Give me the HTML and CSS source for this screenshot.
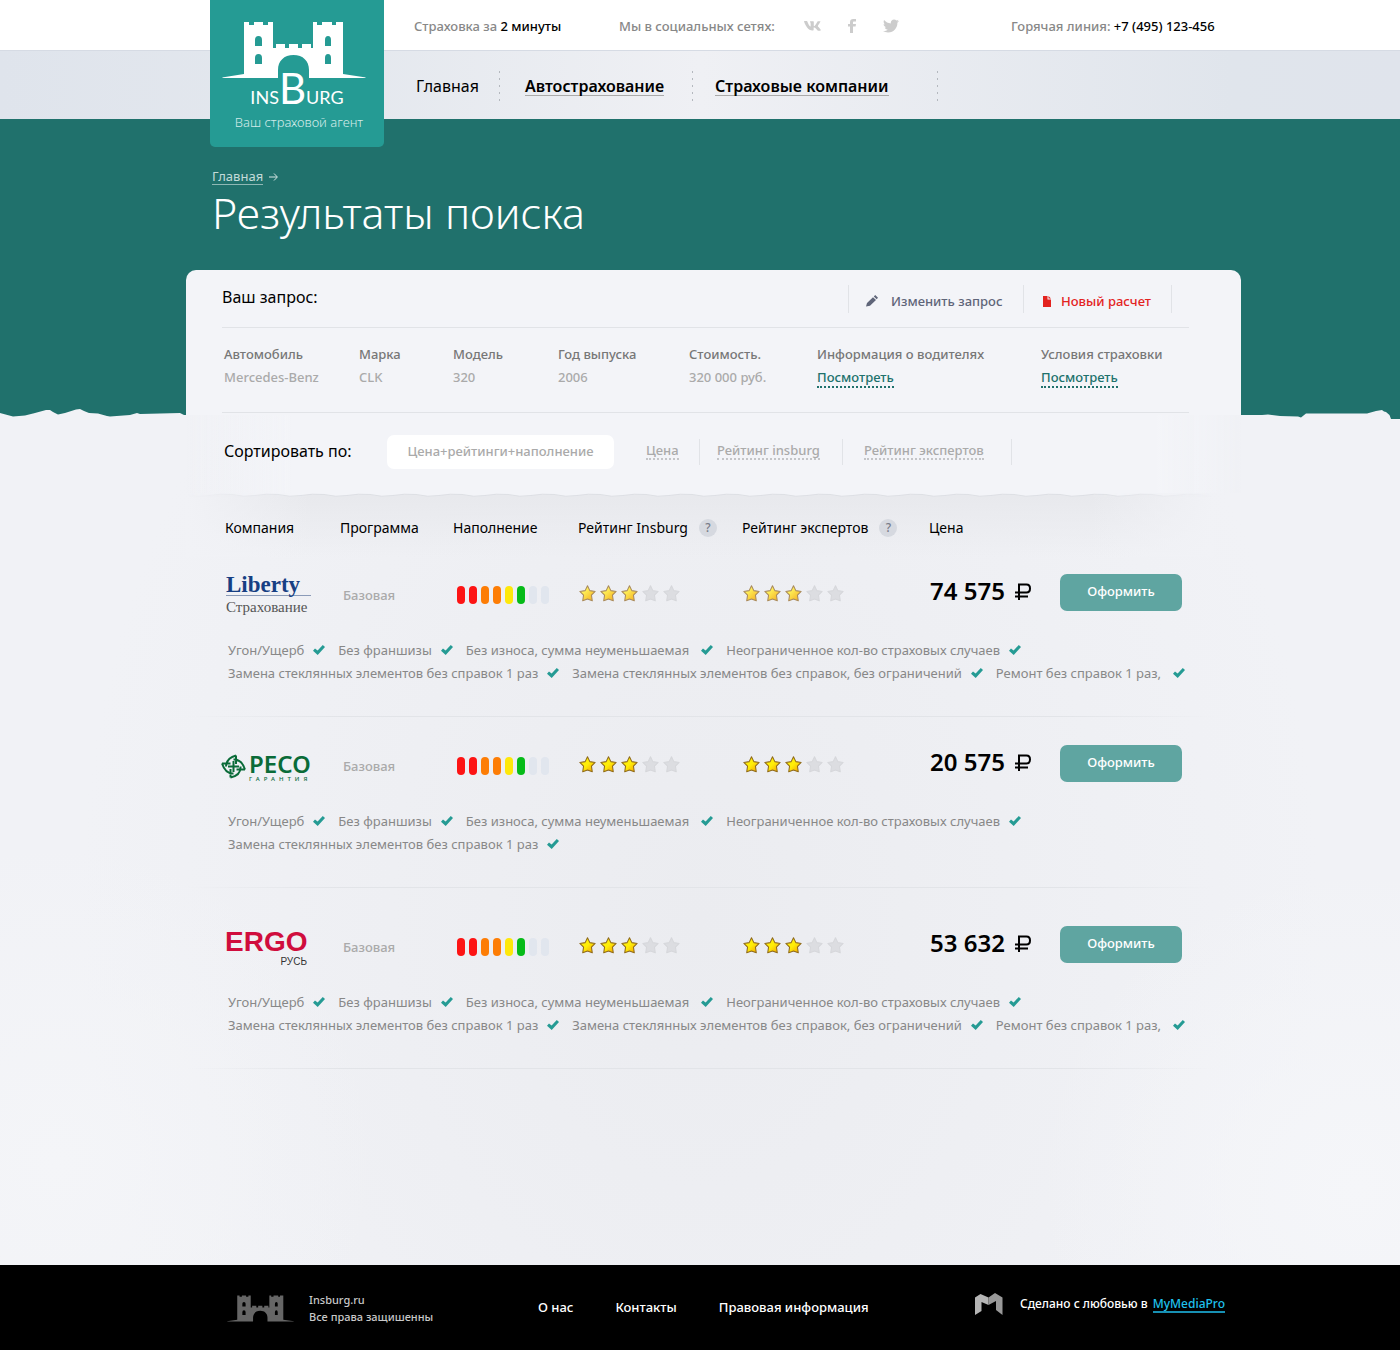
FILE: index.html
```html
<!DOCTYPE html>
<html lang="ru">
<head>
<meta charset="utf-8">
<meta name="viewport" content="width=device-width, initial-scale=1">
<title>Результаты поиска — Insburg</title>
<link rel="stylesheet" href="styles.css">
</head>
<body>
<svg class="sprite" aria-hidden="true">
  <symbol id="castle" viewBox="0 0 144 58"><path fill-rule="evenodd" d="M0 57.500L22 54V2h5v3h5V2h9v3h5V2h5v26h3v-4h9v4h4v-4h9v4h4v-4h9v4h2V2h4v3h5V2h10v3h4V2h7v52l23 3.500-1 .5H87V50c0-9-6-15-15.500-15S56 41 56 50v8H1zM33 26h7v-6a3.500 4 0 0 0-7 0zm0 18h7v-6a3.500 4 0 0 0-7 0zm70-18h6v-6a3 4 0 0 0-6 0zm0 18h6v-6a3 4 0 0 0-6 0z"/></symbol>
  <symbol id="vk" viewBox="0 6.500 21.500 12.500"><path d="M20.800 7.700c.1-.5 0-.8-.7-.8h-2.300c-.6 0-.9.3-1 .6 0 0-1.200 2.900-2.900 4.700-.5.5-.8.7-1.100.7-.1 0-.4-.2-.4-.6V7.700c0-.5-.2-.8-.7-.8H8.100c-.4 0-.6.3-.6.5 0 .5.8.7.9 2.100v3.100c0 .7-.1.8-.4.8-.8 0-2.700-2.900-3.800-6.200-.2-.6-.4-.9-1-.9H.9c-.7 0-.8.3-.8.6 0 .6.8 3.600 3.600 7.500 1.900 2.700 4.500 4.100 6.900 4.100 1.400 0 1.600-.3 1.600-.9v-2c0-.7.1-.8.6-.8.3 0 1 .2 2.400 1.500 1.600 1.600 1.900 2.300 2.800 2.300h2.300c.7 0 1-.3.8-1-.2-.6-.9-1.600-1.900-2.700-.5-.6-1.300-1.300-1.500-1.600-.3-.4-.2-.6 0-1 0 0 2.700-3.800 3-5.100z"/></symbol>
  <symbol id="fb" viewBox="0 0 8 14"><path d="M2 14V7.600H0V5h2V3.200C2 1.200 3.200 0 5.200 0H8v2.500H6.200C5.300 2.500 5 2.800 5 3.500V5h3l-.4 2.600H5V14z"/></symbol>
  <symbol id="tw" viewBox="0 2 24 20"><path d="M23.954 4.569c-.885.389-1.830.654-2.825.775 1.014-.611 1.794-1.574 2.163-2.723-.951.555-2.005.959-3.127 1.184-.896-.959-2.173-1.559-3.591-1.559-2.717 0-4.920 2.203-4.920 4.917 0 .39.045.765.127 1.124C7.691 8.094 4.066 6.130 1.640 3.161c-.427.722-.666 1.561-.666 2.475 0 1.710.87 3.213 2.188 4.096-.807-.026-1.566-.248-2.228-.616v.061c0 2.385 1.693 4.374 3.946 4.827-.413.111-.849.171-1.296.171-.314 0-.615-.03-.916-.086.631 1.953 2.445 3.377 4.604 3.417-1.680 1.319-3.809 2.105-6.102 2.105-.39 0-.779-.023-1.170-.067 2.189 1.394 4.768 2.209 7.557 2.209 9.054 0 13.999-7.496 13.999-13.986 0-.209 0-.42-.015-.63.961-.689 1.800-1.560 2.460-2.548z"/></symbol>
  <symbol id="star" viewBox="0 0 16 16"><path d="M8 .8l2.200 4.500 5 .8-3.500 3.500.8 5.200L8 13.100 3.500 14.800l.8-5.200L.8 6.100l5-.8z" stroke-width="1" stroke-linejoin="round"/></symbol>
  <symbol id="check" viewBox="0 0 12 10"><path d="M0 5.700L2 3.600l2.600 2L9.800 0 12 2 4.700 10z"/></symbol>
  <symbol id="ruble" viewBox="0 0 16 17"><path d="M4 17V1.500h7.500q3.500 0 3.500 4T11.500 9.500H0M0 13.500h13" fill="none" stroke="#000" stroke-width="2"/></symbol>
  <symbol id="pencil" viewBox="0 0 12 12"><path d="M0 11.500L1 8l6-5.800L10 5l-6 5.800zM7.800 1.500L9.200 0 12 2.800 10.700 4.200z"/></symbol>
  <symbol id="page" viewBox="0 0 8 11"><path d="M0 0h4.500v3.500H8V11H0zM5.500 0L8 2.600H5.500z"/></symbol>
  <linearGradient id="gold" x1="0" y1="0" x2="1" y2="1"><stop offset=".3" stop-color="#fff25a"/><stop offset="1" stop-color="#f3a81c"/></linearGradient>
  <linearGradient id="gold-bright" x1="0" y1="0" x2="1" y2="1"><stop offset=".5" stop-color="#ffee08"/><stop offset="1" stop-color="#f39a00"/></linearGradient>
  <pattern id="wave" width="46" height="4" patternUnits="userSpaceOnUse"><path d="M0 0H46V1.500Q34 .5 23 2.500T0 1.500z" fill="#f3f4f8"/><path d="M0 1.500Q12 4.500 23 2.500T46 1.500" fill="none" stroke="#dddfe4"/></pattern>
</svg>

<header class="header">
  <div class="topbar">
    <div class="wrap topbar-row">
      <p>Страховка за <strong>2 минуты</strong></p>
      <p>Мы в социальных сетях:</p>
      <div class="social">
        <a href="#" aria-label="ВКонтакте"><svg width="17" height="10"><use href="#vk"/></svg></a>
        <a href="#" aria-label="Facebook"><svg width="8" height="14"><use href="#fb"/></svg></a>
        <a href="#" aria-label="Twitter"><svg width="16" height="14"><use href="#tw"/></svg></a>
      </div>
      <p>Горячая линия: <strong>+7 (495) 123-456</strong></p>
    </div>
  </div>
  <div class="navbar">
    <nav class="wrap nav-row">
      <a class="nav-home" href="#">Главная</a>
      <a class="nav-auto" href="#"><span>Автострахование</span></a>
      <a class="nav-firms" href="#"><span>Страховые компании</span></a>
    </nav>
  </div>
  <div class="wrap logo-anchor">
    <a class="logo" href="#">
      <svg class="logo-castle" width="144" height="58"><use href="#castle"/></svg>
      <span class="logo-name">INS<b>B</b>URG</span>
      <span class="logo-tagline">Ваш страховой агент</span>
    </a>
  </div>
</header>

<section class="hero">
  <div class="wrap">
    <p class="crumbs"><a href="#">Главная</a>
      <svg width="9" height="8" viewBox="0 0 9 8"><path d="M0 4h8M5 .5L8.400 4 5 7.500" fill="none" stroke="#d5e6e4"/></svg></p>
    <h1>Результаты поиска</h1>
  </div>
</section>
<svg class="torn" viewBox="0 0 1400 11" preserveAspectRatio="none" aria-hidden="true"><path d="M0 0H1400V11H1391L1389.500 7 1386 4 1384 3.500 1382 2 1376 3 1367 5.500H1306L1301 9.500 1298 8.500 1280 8 1268 6.500 1262 7H184L180 5 140 6 137 5 130 7 110 8.500 107 8 98 5.500 89 5 84 3 80 1 76 1.500 65 5 58 6.500 53 4 50 2 46 2 35 5 25 7.500 13 8.500 0 5z"/></svg>

<main class="wrap main">
  <section class="sheet">
    <div class="query-head">
      <h2>Ваш запрос:</h2>
      <div class="query-actions">
        <a class="edit" href="#"><svg width="12" height="12"><use href="#pencil"/></svg>Изменить запрос</a>
        <a class="new" href="#"><svg width="8" height="11"><use href="#page"/></svg>Новый расчет</a>
      </div>
    </div>
    <dl class="query">
      <div><dt>Автомобиль</dt><dd>Mercedes-Benz</dd></div>
      <div><dt>Марка</dt><dd>CLK</dd></div>
      <div><dt>Модель</dt><dd>320</dd></div>
      <div><dt>Год выпуска</dt><dd>2006</dd></div>
      <div><dt>Стоимость.</dt><dd>320 000 руб.</dd></div>
      <div><dt>Информация о водителях</dt><dd><a href="#">Посмотреть</a></dd></div>
      <div><dt>Условия страховки</dt><dd><a href="#">Посмотреть</a></dd></div>
    </dl>
    <div class="sort">
      <h2>Сортировать по:</h2>
      <button class="sort-current" type="button">Цена+рейтинги+наполнение</button>
      <ul class="sort-list">
        <li class="by-price"><a href="#">Цена</a></li>
        <li class="by-insburg"><a href="#">Рейтинг insburg</a></li>
        <li class="by-experts"><a href="#">Рейтинг экспертов</a></li>
      </ul>
    </div>
  </section>
  <svg class="wavy" aria-hidden="true"><rect width="100%" height="4" fill="url(#wave)"/></svg>

  <table class="results">
    <colgroup><col class="c-company"><col class="c-program"><col class="c-fill"><col class="c-insburg"><col class="c-experts"><col class="c-price"><col class="c-action"></colgroup>
    <thead>
      <tr>
        <th scope="col">Компания</th><th scope="col">Программа</th><th scope="col">Наполнение</th>
        <th scope="col"><span class="with-help">Рейтинг Insburg <button class="help" type="button">?</button></span></th>
        <th scope="col"><span class="with-help">Рейтинг экспертов <button class="help" type="button">?</button></span></th>
        <th scope="col">Цена</th><td></td>
      </tr>
    </thead>
    <tbody class="first">
      <tr class="offer">
        <td><span class="liberty"><b>Liberty</b><span>Страхование</span></span></td>
        <td class="program">Базовая</td>
        <td><span class="bars"><i class="red"></i><i class="red"></i><i class="orange"></i><i class="orange"></i><i class="yellow"></i><i class="green"></i><i></i><i></i></span></td>
        <td><span class="stars soft"><svg class="on"><use href="#star"/></svg><svg class="on"><use href="#star"/></svg><svg class="on"><use href="#star"/></svg><svg><use href="#star"/></svg><svg><use href="#star"/></svg></span></td>
        <td><span class="stars soft"><svg class="on"><use href="#star"/></svg><svg class="on"><use href="#star"/></svg><svg class="on"><use href="#star"/></svg><svg><use href="#star"/></svg><svg><use href="#star"/></svg></span></td>
        <td><span class="price">74 575 <svg width="16" height="17"><use href="#ruble"/></svg></span></td>
        <td><button class="order" type="button">Оформить</button></td>
      </tr>
      <tr>
        <td class="features-cell" colspan="7">
          <ul class="features">
            <li>Угон/Ущерб <svg><use href="#check"/></svg></li>
            <li>Без франшизы <svg><use href="#check"/></svg></li>
            <li class="wide">Без износа, сумма неуменьшаемая <svg><use href="#check"/></svg></li>
            <li>Неограниченное кол-во страховых случаев <svg><use href="#check"/></svg></li>
            <li>Замена стеклянных элементов без справок 1 раз <svg><use href="#check"/></svg></li>
            <li>Замена стеклянных элементов без справок, без ограничений <svg><use href="#check"/></svg></li>
            <li class="wide">Ремонт без справок 1 раз, <svg><use href="#check"/></svg></li>
          </ul>
        </td>
      </tr>
    </tbody>
    <tbody>
      <tr class="offer">
        <td><span class="reco"><svg width="25" height="25" viewBox="0 0 25 25"><path d="M15 1.500Q5.500 4 5 12.500M1 9.500Q4.500 20 12.500 19.500M9.500 23.500Q20 21.500 19.500 12.500M24 15.500Q20.500 5 12.500 5.500M15 1.500V10M1 9.500h8.500M9.500 23.500V15M24 15.500h-8.500M12.500 7v11M7 12.500h11" fill="none" stroke="#0a6b38" stroke-width="2"/></svg><span class="reco-text"><b>РЕСО</b><small>ГАРАНТИЯ</small></span></span></td>
        <td class="program">Базовая</td>
        <td><span class="bars"><i class="red"></i><i class="red"></i><i class="orange"></i><i class="orange"></i><i class="yellow"></i><i class="green"></i><i></i><i></i></span></td>
        <td><span class="stars"><svg class="on"><use href="#star"/></svg><svg class="on"><use href="#star"/></svg><svg class="on"><use href="#star"/></svg><svg><use href="#star"/></svg><svg><use href="#star"/></svg></span></td>
        <td><span class="stars"><svg class="on"><use href="#star"/></svg><svg class="on"><use href="#star"/></svg><svg class="on"><use href="#star"/></svg><svg><use href="#star"/></svg><svg><use href="#star"/></svg></span></td>
        <td><span class="price">20 575 <svg width="16" height="17"><use href="#ruble"/></svg></span></td>
        <td><button class="order" type="button">Оформить</button></td>
      </tr>
      <tr>
        <td class="features-cell" colspan="7">
          <ul class="features">
            <li>Угон/Ущерб <svg><use href="#check"/></svg></li>
            <li>Без франшизы <svg><use href="#check"/></svg></li>
            <li class="wide">Без износа, сумма неуменьшаемая <svg><use href="#check"/></svg></li>
            <li>Неограниченное кол-во страховых случаев <svg><use href="#check"/></svg></li>
            <li>Замена стеклянных элементов без справок 1 раз <svg><use href="#check"/></svg></li>
          </ul>
        </td>
      </tr>
    </tbody>
    <tbody class="spaced">
      <tr class="offer">
        <td><span class="ergo"><b>ERGO</b><span>РУСЬ</span></span></td>
        <td class="program">Базовая</td>
        <td><span class="bars"><i class="red"></i><i class="red"></i><i class="orange"></i><i class="orange"></i><i class="yellow"></i><i class="green"></i><i></i><i></i></span></td>
        <td><span class="stars"><svg class="on"><use href="#star"/></svg><svg class="on"><use href="#star"/></svg><svg class="on"><use href="#star"/></svg><svg><use href="#star"/></svg><svg><use href="#star"/></svg></span></td>
        <td><span class="stars"><svg class="on"><use href="#star"/></svg><svg class="on"><use href="#star"/></svg><svg class="on"><use href="#star"/></svg><svg><use href="#star"/></svg><svg><use href="#star"/></svg></span></td>
        <td><span class="price">53 632 <svg width="16" height="17"><use href="#ruble"/></svg></span></td>
        <td><button class="order" type="button">Оформить</button></td>
      </tr>
      <tr>
        <td class="features-cell" colspan="7">
          <ul class="features">
            <li>Угон/Ущерб <svg><use href="#check"/></svg></li>
            <li>Без франшизы <svg><use href="#check"/></svg></li>
            <li class="wide">Без износа, сумма неуменьшаемая <svg><use href="#check"/></svg></li>
            <li>Неограниченное кол-во страховых случаев <svg><use href="#check"/></svg></li>
            <li>Замена стеклянных элементов без справок 1 раз <svg><use href="#check"/></svg></li>
            <li>Замена стеклянных элементов без справок, без ограничений <svg><use href="#check"/></svg></li>
            <li class="wide">Ремонт без справок 1 раз, <svg><use href="#check"/></svg></li>
          </ul>
        </td>
      </tr>
    </tbody>
  </table>
</main>

<footer class="footer">
  <div class="wrap footer-row">
    <svg class="footer-castle" width="67" height="28"><use href="#castle"/></svg>
    <p class="copyright">Insburg.ru<br>Все права защишенны</p>
    <nav class="footer-nav"><a href="#">О нас</a><a href="#">Контакты</a><a href="#">Правовая информация</a></nav>
    <p class="made"><svg width="28" height="22" viewBox="0 0 28 22"><path d="M0 4.500L5.500 1 13.500 4.500V12L6.500 9v9L0 22z" fill="#b5b5b5"/><path d="M13.500 4.500L20 0l7.500 4.500V22L21 17V8l-7.500 4z" fill="#999"/></svg>
      <span>Сделано с любовью в <a href="#">MyMediaPro</a></span></p>
  </div>
</footer>
</body>
</html>
```
FILE: styles.css
```css
* { box-sizing: border-box; }

body {
  margin: 0;
  min-height: 100vh;
  display: flex;
  flex-direction: column;
  font: 500 13px/20px "Noto Sans", "Open Sans", sans-serif;
  color: #888;
  background:
    radial-gradient(circle at 4% 86%, #f4f5f8 0, rgba(244, 245, 248, 0) 320px),
    radial-gradient(circle at 97% 88%, #f5f6f9 0, rgba(245, 246, 249, 0) 320px),
    radial-gradient(ellipse at 50% 68%, #ebecf0 0, rgba(235, 236, 240, 0) 620px),
    #f1f2f6;
}

h1, h2, p, ul, dl, dd { margin: 0; padding: 0; }
h1, h2 { font-weight: 400; }
ul { list-style: none; }
a { color: inherit; text-decoration: none; }
button { font: inherit; border: 0; padding: 0; cursor: pointer; }
svg { display: block; flex: none; fill: currentColor; }
.sprite { position: absolute; width: 0; height: 0; }
.wrap { width: 100%; max-width: 1028px; margin: 0 auto; padding-left: 24px; }

/* Header */
.topbar { background: #fff; border-bottom: 1px solid #d6dbe4; }
.topbar-row {
  display: grid;
  grid-template-columns: 205px 185px 207px max-content;
  align-items: center;
  height: 50px;
  padding: 1px 0 0 228px;
  white-space: nowrap;
}
.topbar strong { font-weight: 500; color: #000; }
.social { display: flex; align-items: center; gap: 27px; color: #ccc; }

.navbar { background: linear-gradient(90deg, #dfe4ec, #e4e8ee 25%, #eff0f4 50%, #e0e5ec 88%, #e0e4ec); }
.nav-row {
  display: flex;
  align-items: center;
  height: 68px;
  padding: 2px 0 0 230px;
  font-size: 16px;
  font-weight: 400;
  line-height: 18px;
  color: #000;
}
.nav-row a {
  padding: 6px 0;
  background: repeating-linear-gradient(#b4b8be 0 2px, transparent 2px 7px) right / 1px 100% no-repeat;
}
.nav-row span { display: inline-block; border-bottom: 1px solid #aaa; }
.nav-home { width: 84px; }
.nav-row .nav-auto { width: 193px; padding-left: 25px; font-weight: 600; }
.nav-row .nav-firms { width: 245px; padding-left: 22px; font-weight: 600; }

.logo-anchor { position: relative; }
.logo {
  position: absolute;
  left: 24px;
  bottom: -28px;
  width: 174px;
  height: 147px;
  padding-top: 20px;
  display: flex;
  flex-direction: column;
  align-items: center;
  color: #fff;
  background: #259b94;
  border-radius: 0 0 5px 5px;
}
.logo-castle { margin-left: -6px; }
.logo-name {
  height: 34px;
  margin-top: -8px;
  font: 400 18px/36px Lato, "Liberation Sans", sans-serif;
}
.logo-name b { font-size: 42px; font-weight: 400; }
.logo-tagline { margin-left: 4px; font-size: 13px; font-weight: 300; line-height: 36px; color: #d3ebe9; }

/* Page title on the torn teal strip */
.hero { height: 289px; padding-top: 49px; background: #20716c; color: #fff; }
.hero .wrap { padding-left: 26px; }
.crumbs { display: flex; align-items: center; gap: 6px; font-weight: 400; color: #c3dbd9; }
.crumbs a { line-height: 16px; border-bottom: 1px solid #8fb8b5; }
h1 { font-size: 43px; font-weight: 300; line-height: 55px; }
.torn { width: 100%; height: 11px; fill: #20716c; }

/* Query sheet */
.main { position: relative; margin-top: -149px; padding-left: 0; flex: 1 0 auto; }
.sheet {
  margin-right: -27px;
  padding: 0 52px 0 36px;
  height: 223px;
  border-radius: 10px 10px 0 0;
  background: linear-gradient(90deg, rgba(240, 242, 247, 0), #f3f4f8 10% 92%, rgba(240, 242, 247, 0)) bottom / 100% 78px no-repeat,
    linear-gradient(#f3f4f8, #f3f4f8) top / 100% 145px no-repeat;
}
.wavy {
  width: 100%;
  height: 4px;
  -webkit-mask-image: linear-gradient(90deg, transparent, #000 12% 88%, transparent);
  mask-image: linear-gradient(90deg, transparent, #000 12% 88%, transparent);
  background: #e8e9ed;
}
h2 { font-size: 16px; line-height: 24px; color: #000; }
.query-head { display: flex; justify-content: space-between; height: 58px; padding-top: 15px; border-bottom: 1px solid #e1e3e7; }
.query-actions { display: flex; margin-right: 17px; height: 28px; border-left: 1px solid #e1e3e7; }
.query-actions a { display: flex; align-items: center; padding-top: 4px; border-right: 1px solid #e1e3e7; }
.edit { width: 175px; padding-left: 17px; gap: 13px; color: #5f6579; }
.new { width: 148px; padding-left: 19px; gap: 10px; color: #e3231f; }
.query {
  display: grid;
  grid-template-columns: 135px 94px 105px 131px 128px 224px 1fr;
  height: 85px;
  padding: 15px 0 0 2px;
  border-bottom: 1px solid #e1e3e7;
}
.query dt, .query dd { line-height: 23px; white-space: nowrap; }
.query dt { color: #777; }
.query dd { color: #aaa; }
.query dd a { display: inline-block; line-height: 17px; color: #20716c; border-bottom: 2px dotted #20716c; }
.sort { display: flex; align-items: center; height: 77px; padding-left: 2px; }
.sort h2 { width: 163px; padding-bottom: 1px; }
.sort-current { width: 227px; height: 34px; padding-bottom: 2px; border-radius: 7px; background: #fff; color: #aaa; }
.sort-list { display: flex; margin-left: 32px; color: #aaa; }
.sort-list li { border-right: 1px solid #e1e3e7; height: 26px; line-height: 23px; white-space: nowrap; }
.sort-list a { display: inline-block; line-height: 16px; border-bottom: 2px dotted #c4c5c8; }
.by-price { width: 54px; }
.by-insburg { width: 143px; padding-left: 17px; }
.by-experts { width: 169px; padding-left: 21px; }

/* Results */
.results {
  width: 100%;
  table-layout: fixed;
  border-collapse: separate;
  border-spacing: 0;
  background:
    linear-gradient(90deg, #f1f2f6, rgba(241, 242, 246, 0) 12% 88%, #f1f2f6) top / 100% 60px no-repeat,
    linear-gradient(#e8e9ed, rgba(240, 241, 245, 0)) top / 100% 60px no-repeat;
}
.results th, .results td { padding: 0; text-align: left; vertical-align: top; }
.results th { height: 77px; padding-top: 21px; font-size: 14px; font-weight: 400; color: #000; white-space: nowrap; }
.results th:first-child { padding-left: 39px; }
.c-company { width: 154px; }
.c-program { width: 113px; }
.c-fill { width: 125px; }
.c-insburg { width: 164px; }
.c-experts { width: 187px; }
.c-price { width: 131px; }
.with-help { display: flex; align-items: center; gap: 11px; }
.help { width: 18px; height: 18px; border-radius: 50%; background: #d6d9e0; color: #777b88; font-size: 12px; font-weight: 500; line-height: 18px; }
.offer td { height: 93px; border-top: 28px solid transparent; }
.first .offer td { height: 65px; border-top: 0; }
.spaced .offer td { height: 103px; border-top-width: 38px; }
.results .offer td:first-child { padding-left: 35px; }
.results .program { padding: 11px 0 0 3px; color: #aaa; }
.bars { display: flex; gap: 4px; padding: 12px 0 0 4px; }
.bars i { width: 8px; height: 18px; border-radius: 4px; background: #e1e6ee; }
.bars .red { background: #fd1414; }
.bars .orange { background: #fd7d05; }
.bars .yellow { background: #fee80a; }
.bars .green { background: #06bb18; }
.stars { display: flex; gap: 4px; padding: 11px 0 0 1px; }
.stars svg { width: 17px; height: 17px; fill: #dcdde1; stroke: #d6d7db; }
.stars .on { fill: url(#gold-bright); stroke: #8f6a1b; }
.stars.soft .on { fill: url(#gold); stroke: #a98a5c; }
.price { display: flex; align-items: center; gap: 10px; padding: 2px 0 0 1px; font-size: 24px; font-weight: 600; line-height: 30px; color: #000; white-space: nowrap; }
.order { width: 122px; height: 37px; padding-bottom: 3px; border-radius: 7px; background: #5fa5a1; color: #fff; }
.features-cell {
  height: 78px;
  background: linear-gradient(90deg, rgba(226, 228, 232, 0), #e2e4e8 15% 85%, rgba(226, 228, 232, 0)) bottom / 100% 1px no-repeat;
}
.features { display: flex; flex-wrap: wrap; column-gap: 13px; padding-left: 42px; line-height: 23px; font-weight: 400; }
.features li { display: flex; gap: 9px; align-items: center; white-space: nowrap; }
.features .wide { gap: 12px; }
.features svg { width: 12px; height: 10px; margin-bottom: 2px; color: #259b94; }

/* Insurer marks */
.liberty { display: flex; flex-direction: column; width: 85px; margin-left: 5px; font-family: "Liberation Serif", serif; font-weight: 400; }
.liberty b { font-size: 23px; line-height: 21px; color: #173f83; border-bottom: 1px solid #8b9bb8; }
.liberty span { font-size: 15px; line-height: 22px; color: #555; }
.reco { display: flex; align-items: flex-start; gap: 3px; padding-top: 9px; color: #0a6b38; }
.reco-text { display: flex; flex-direction: column; }
.reco b { font-size: 24px; font-weight: 600; line-height: 20px; }
.reco small { margin-top: 2px; font-size: 6px; line-height: 6px; letter-spacing: 4px; }
.ergo { display: flex; flex-direction: column; width: 82px; margin-left: 4px; font-family: "Liberation Sans", sans-serif; font-weight: 400; }
.ergo b { font-size: 28px; line-height: 32px; color: #d00d3d; }
.ergo span { align-self: flex-end; font-size: 10px; line-height: 8px; color: #333; }

/* Footer */
.footer { background: #000; color: #fff; }
.footer-row { display: flex; align-items: center; height: 85px; padding-left: 41px; }
.footer-castle { color: #666; }
.copyright { margin-left: 15px; width: 229px; font-size: 11px; line-height: 17px; color: #c8c8c8; }
.footer-nav { display: flex; gap: 42px; padding-bottom: 2px; font-size: 13px; white-space: nowrap; }
.made { display: flex; align-items: center; gap: 17px; margin: 0 -11px 8px auto; font-size: 12px; line-height: 18px; white-space: nowrap; }
.made a { display: inline-block; line-height: 15px; margin-left: 2px; color: #1fc1ee; border-bottom: 2px solid #1790b3; }
```
